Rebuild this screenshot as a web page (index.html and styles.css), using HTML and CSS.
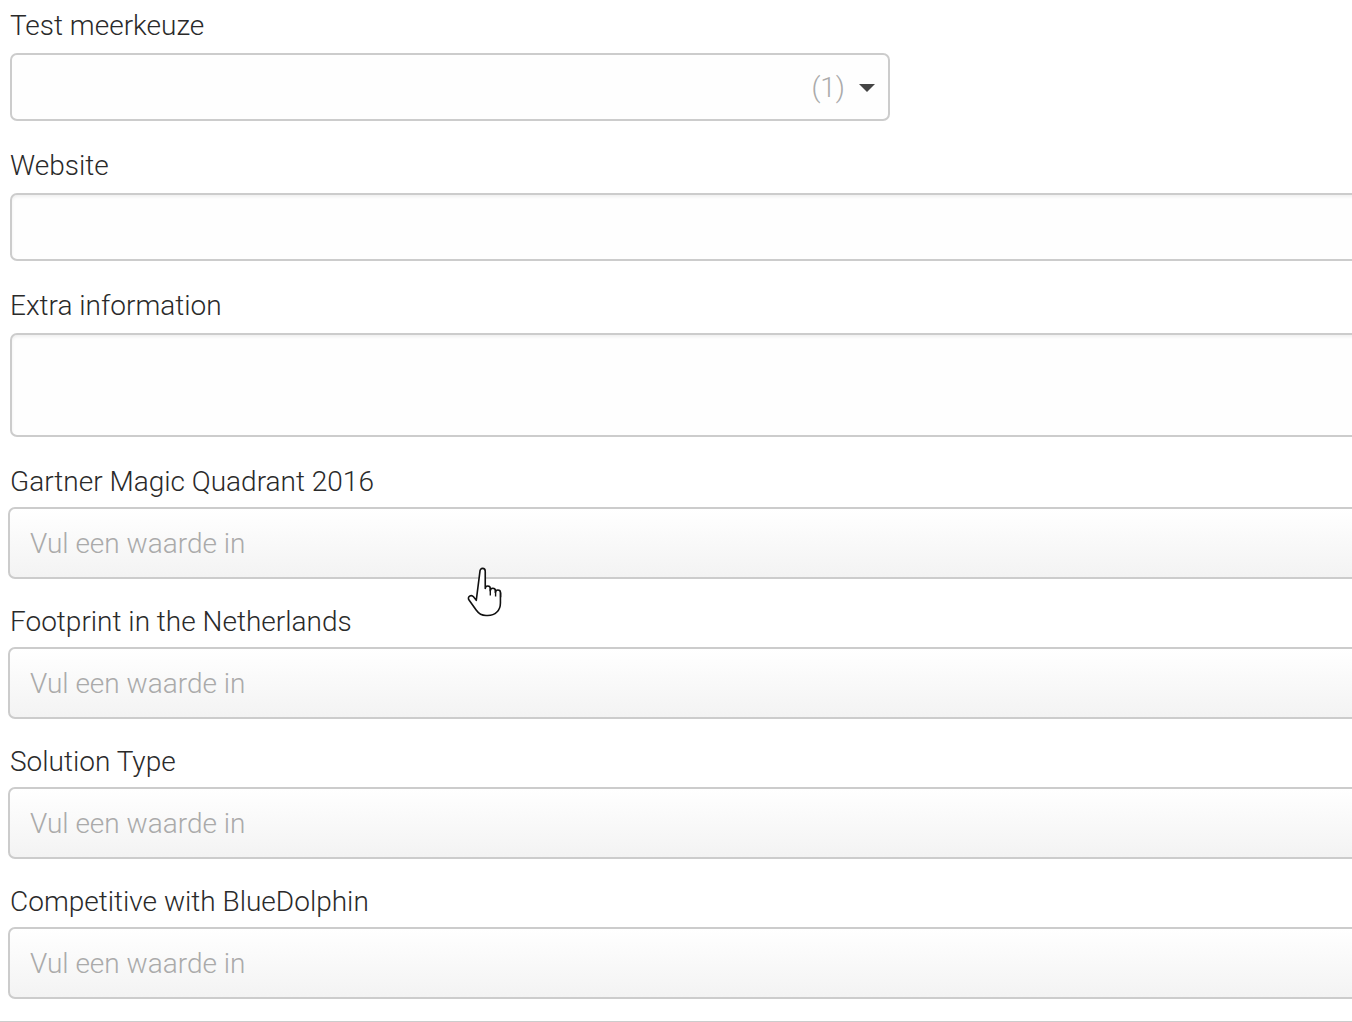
FILE: index.html
```html
<!DOCTYPE html>
<html lang="en">
<head>
  <meta charset="UTF-8">
  <title>Formulier</title>
  <link rel="stylesheet" href="styles.css">
</head>
<body>
  <form class="form">
    <div class="field">
      <label>Test meerkeuze</label>
      <div class="select">
        <span class="count">(1)</span>
        <span class="caret"></span>
      </div>
    </div>

    <div class="field">
      <label>Website</label>
      <input type="text" class="text">
    </div>

    <div class="field">
      <label>Extra information</label>
      <textarea class="area"></textarea>
    </div>

    <div class="field field-pick">
      <label>Gartner Magic Quadrant 2016</label>
      <input type="text" class="pick" placeholder="Vul een waarde in">
    </div>

    <div class="field field-pick">
      <label>Footprint in the Netherlands</label>
      <input type="text" class="pick" placeholder="Vul een waarde in">
    </div>

    <div class="field field-pick">
      <label>Solution Type</label>
      <input type="text" class="pick" placeholder="Vul een waarde in">
    </div>

    <div class="field field-pick">
      <label>Competitive with BlueDolphin</label>
      <input type="text" class="pick" placeholder="Vul een waarde in">
    </div>

    <div class="divider"></div>
  </form>

  <svg class="cursor" width="46" height="58" viewBox="0 0 40 50">
    <path d="M13 3.5c0-1.4 1-2.5 2.3-2.5s2.3 1.1 2.3 2.5v15c0-1.3 1-2.2 2.2-2.2s2.2 0.9 2.2 2.2v2c0-1.3 1-2.2 2.2-2.2s2.2 0.9 2.2 2.2v1.5c0-1.3 1-2.2 2.2-2.2s2.2 0.9 2.2 2.2v9c0 6.5-4.5 11-11 11h-1.5c-3.7 0-6.5-1.8-8.6-4.8l-6.2-8.7c-0.9-1.2-0.6-2.7 0.5-3.4s2.6-0.4 3.4 0.6l2.4 3.1z" fill="#fff" stroke="#111" stroke-width="1.4" stroke-linejoin="round"/>
    <path d="M22 18.5v6M26.6 20.5v5M31 22v4" stroke="#111" stroke-width="1.2" fill="none"/>
  </svg>
</body>
</html>
```

FILE: styles.css
```css
html, body { margin: 0; padding: 0; background: #fff; overflow: hidden; }
body { font-family: Roboto, "Noto Sans", sans-serif; font-weight: 300; color: #222; width: 1352px; height: 1022px; position: relative; }

.form { width: 1420px; padding: 10px 0 0 0; }
.field { margin-bottom: 29px; padding-left: 10px; }
.field label { display: block; font-size: 28px; line-height: 32px; margin-bottom: 11px; color: #2a2a2a; }

.select { box-sizing: border-box; width: 880px; height: 68px; border: 2px solid #ccc; border-radius: 7px; background: #fefefe; display: flex; align-items: center; justify-content: flex-end; padding-right: 13px; }
.count { font-size: 28px; color: #aaa; margin-right: 14px; }
.caret { width: 0; height: 0; border-left: 8px solid transparent; border-right: 8px solid transparent; border-top: 8px solid #444; margin-top: 2px; }

.text, .area { box-sizing: border-box; display: block; width: 100%; border: 2px solid #ccc; border-radius: 7px; background: #fefefe; box-shadow: inset 0 2px 3px rgba(0, 0, 0, 0.06); font: inherit; font-size: 28px; outline: none; }
.text { height: 68px; }
.area { height: 104px; resize: none; }

.field-pick { padding-left: 8px; margin-bottom: 27px; }
.field-pick label { padding-left: 2px; margin-bottom: 9px; }
.pick { box-sizing: border-box; display: block; width: 100%; height: 72px; border: 2px solid #ccc; border-radius: 7px; background: linear-gradient(#fff, #f3f3f3); padding: 0 20px; font: inherit; font-size: 28px; color: #333; outline: none; }
.pick::placeholder { color: #aaa; }

.divider { border-top: 2px solid #ccc; margin-top: -5px; }

.cursor { position: absolute; left: 465px; top: 567px; }
```
